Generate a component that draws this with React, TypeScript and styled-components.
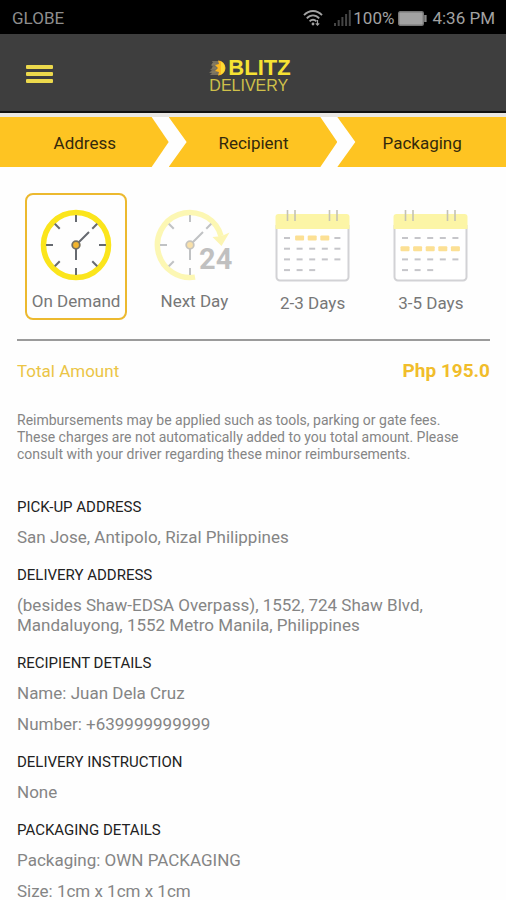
import React, { useState } from "react";
import styled, { createGlobalStyle } from "styled-components";

const GlobalStyle = createGlobalStyle`
  * { box-sizing: border-box; }
  html { scrollbar-width: none; }
  body {
    margin: 0;
    background: #fefefe;
    font-family: Roboto, "Liberation Sans", sans-serif;
  }
  button { font: inherit; border: 0; background: none; padding: 0; cursor: pointer; }
  h2, p, ol { margin: 0; padding: 0; }
`;

const Page = styled.div`
  display: flex;
  flex-direction: column;
  min-height: 100vh;
`;

const StatusBar = styled.div`
  display: flex;
  align-items: center;
  justify-content: space-between;
  height: 34px;
  padding: 2px 11px 0 12px;
  background: #000;
  color: #a2a2a2;
  font-size: 17px;
  line-height: 20px;
`;

const Carrier = styled.span`
  color: #8e8e8e;
`;

const StatusGroup = styled.div`
  display: flex;
  align-items: center;
`;

const WifiSvg = styled.svg`
  display: block;
  margin-right: 11px;
`;

const SignalSvg = styled.svg`
  display: block;
  margin-right: 2px;
`;

const BatterySvg = styled.svg`
  display: block;
  margin: 0 5px 0 4px;
`;

const AppBar = styled.header`
  display: grid;
  grid-template-columns: 1fr auto 1fr;
  align-items: center;
  height: 79px;
  padding: 0 26px;
  background: #3e3e3e;
  border-bottom: 2px solid #111;
`;

const MenuButton = styled.button`
  display: flex;
  flex-direction: column;
  gap: 3px;
  width: 28px;
  padding-top: 2px;
`;

const MenuBar = styled.span`
  width: 27px;
  height: 4px;
  border-radius: 1px;
  background: #ecd94c;
`;

const Logo = styled.div`
  display: flex;
  flex-direction: column;
  padding-top: 8px;
  margin-right: 6px;
  font-family: "Liberation Sans", Arial, sans-serif;
`;

const LogoTop = styled.div`
  display: flex;
  align-items: center;
  gap: 2px;
  color: #f6e233;
  font-size: 22px;
  line-height: 18px;
  font-weight: 700;
`;

const LogoBottom = styled.div`
  color: #cfc04a;
  font-size: 16px;
  line-height: 18px;
`;

const Steps = styled.ol`
  display: grid;
  grid-template-columns: repeat(3, 1fr);
  list-style: none;
  border-top: 4px solid #e9e7e3;
`;

const Step = styled.li<{ $first: boolean; $last: boolean }>`
  display: flex;
  align-items: center;
  justify-content: center;
  height: 50px;
  padding: 1px 0 0 1px;
  background: #fec422;
  clip-path: polygon(
    0 0,
    ${(p) => (p.$last ? "100%" : "calc(100% - 17px)")} 0,
    100% 50%,
    ${(p) => (p.$last ? "100%" : "calc(100% - 17px)")} 100%,
    0 100%,
    ${(p) => (p.$first ? "0" : "18px")} 50%
  );
`;

const StepButton = styled.button`
  color: #33290c;
  font-size: 17px;
  line-height: 20px;
`;

const Content = styled.main`
  padding: 26px 16px 0 17px;
`;

const SpeedRow = styled.div`
  display: grid;
  grid-template-columns: repeat(4, 1fr);
  padding-bottom: 19px;
  border-bottom: 2px solid #9b9b9b;
`;

const SpeedOption = styled.button<{ $selected: boolean }>`
  display: flex;
  flex-direction: column;
  align-items: center;
  gap: 6px;
  height: 127px;
  margin: 0 8px;
  padding-top: 10px;
  border: 2px solid ${(p) => (p.$selected ? "#ecb92f" : "transparent")};
  border-radius: 8px;
  color: #777;
  font-size: 17px;
  line-height: 20px;
  white-space: nowrap;
`;

const IconSvg = styled.svg`
  display: block;
  flex: none;
  overflow: visible;
`;

const TotalRow = styled.div`
  display: flex;
  align-items: center;
  justify-content: space-between;
  padding-top: 18px;
  line-height: 24px;
`;

const TotalLabel = styled.span`
  color: #ebc546;
  font-size: 17px;
`;

const TotalValue = styled.strong`
  color: #f1bd2b;
  font-size: 19px;
  font-weight: 700;
`;

const Note = styled.p`
  && { margin: 29px 0 35px; }
  max-width: 460px;
  color: #858585;
  font-size: 14px;
  line-height: 17px;
`;

const Section = styled.section`
  display: flex;
  flex-direction: column;
  margin-bottom: 19px;

  &:last-child { margin-bottom: 0; }
`;

const SectionTitle = styled.h2`
  color: #222;
  font-size: 15px;
  line-height: 18px;
  font-weight: 400;
`;

const SectionLine = styled.p`
  && { margin-top: 11px; }
  color: #858585;
  font-size: 17px;
  line-height: 20px;
`;

function WifiIcon() {
  return (
    <WifiSvg width="20" height="18" viewBox="0 0 20 18" fill="none" stroke="#a2a2a2" strokeWidth="1.8" aria-hidden="true">
      <path d="M1 6.2C6 .6 14 .6 19 6.2" />
      <path d="M3.8 9.4c3.6-4 8.8-4 12.4 0" />
      <path d="M6.6 12.4c2-2.2 4.8-2.2 6.8 0" />
      <circle cx="10" cy="15" r="1.4" fill="#a2a2a2" stroke="none" />
      <path d="M14.5 11v5M12.8 14.4l1.7 1.8 1.7-1.8" strokeWidth="1.2" />
    </WifiSvg>
  );
}

function SignalIcon() {
  return (
    <SignalSvg width="17" height="16" viewBox="0 0 17 16" fill="#454545" aria-hidden="true">
      <rect x="0" y="13" width="2" height="3" />
      <rect x="3.7" y="10" width="2" height="6" />
      <rect x="7.4" y="7" width="2" height="9" />
      <rect x="11.1" y="4" width="2" height="12" />
      <rect x="14.8" y="0" width="2" height="16" />
    </SignalSvg>
  );
}

function BatteryIcon() {
  return (
    <BatterySvg width="29" height="15" viewBox="0 0 29 15" aria-hidden="true">
      <rect x=".7" y=".7" width="24.6" height="13.6" rx="1.5" fill="#a2a2a2" stroke="#777" strokeWidth="1.4" />
      <rect x="26.2" y="4" width="2.4" height="7" fill="#8a8a8a" />
    </BatterySvg>
  );
}

function LogoMark() {
  return (
    <svg width="17" height="16" viewBox="0 0 17 16" aria-hidden="true">
      <path d="M3 1h7v14H1l2-2H0l3-3H1l3-3-2-2 2-2z" fill="#77705f" />
      <path d="M3 4h4M3 8h4M3 12h4" stroke="#8f8262" strokeWidth="1" />
      <path d="M9 .5a7.500 7.500 0 0 1 0 15L10 12l-4-1 3-3-3-3 4-1z" fill="#fcb820" />
      <path d="M12 1.500a7.500 7.500 0 0 1 0 13z" fill="#fbdc35" />
    </svg>
  );
}

const TICKS = [0, 45, 90, 135, 180, 225, 270, 315];

function ClockFace({ skip = [] }: { skip?: number[] }) {
  return (
    <>
      <g stroke="#666a70" strokeWidth="2">
        {TICKS.filter((a) => !skip.includes(a)).map((a) => (
          <path key={a} d="M40 10v7" transform={`rotate(${a} 40 40)`} />
        ))}
        <path d="M40 40v15M40 40l13-13" />
      </g>
      <circle cx="40" cy="40" r="3.800" fill="#f3b52c" stroke="#75705f" strokeWidth="1.800" />
    </>
  );
}

function ClockIcon() {
  return (
    <IconSvg width="80" height="80" viewBox="0 0 80 80" aria-hidden="true">
      <circle cx="40" cy="40" r="32.500" fill="none" stroke="#fbe51c" strokeWidth="5.500" />
      <ClockFace />
    </IconSvg>
  );
}

function NextDayIcon() {
  return (
    <IconSvg width="80" height="80" viewBox="0 0 80 80" aria-hidden="true">
      <g opacity=".4">
        <path d="M41 72.100A32.500 32.500 0 1 1 65 25.500L67 31" fill="none" stroke="#fbed46" strokeWidth="5.500" />
        <path d="M58.500 32 64 31.500 70 30 75.500 27.500 67.500 41z" fill="#fbe946" />
        <g transform="translate(-4 0)">
          <ClockFace skip={[90, 135]} />
        </g>
        <text x="45" y="64" fill="#666" fontFamily="Roboto, sans-serif" fontSize="29" fontWeight="700">24</text>
      </g>
    </IconSvg>
  );
}

function CalendarIcon({ marked }: { marked: string[] }) {
  const cells: React.ReactNode[] = [];
  [5, 5, 5, 3].forEach((count, row) => {
    for (let col = 0; col < count; col++) {
      const on = marked.includes(`${row}-${col}`);
      const cx = 15 + col * 12.6;
      const cy = 33 + row * 10.7;
      cells.push(
        <rect
          key={`${row}-${col}`}
          x={cx - (on ? 4.5 : 3)}
          y={cy - (on ? 2.5 : 1)}
          width={on ? 9 : 6}
          height={on ? 5 : 2}
          rx={on ? 1 : 0}
          fill={on ? "#fce094" : "#c6c6ca"}
        />
      );
    }
  });
  return (
    <IconSvg width="80" height="82" viewBox="1 0 80 82" aria-hidden="true">
      <path d="M4.500 20v52a3.500 3.500 0 0 0 3.500 3.500h65a3.500 3.500 0 0 0 3.500-3.500V20" fill="#fff" stroke="#d2d2d5" strokeWidth="2" />
      <path d="M3.500 24V12a3 3 0 0 1 3-3h68a3 3 0 0 1 3 3v12z" fill="#fcf5a6" />
      <path d="M15.500 5v11M23 5v11M57.500 5v11M65 5v11" stroke="#c4c2b4" strokeWidth="1.600" />
      {cells}
    </IconSvg>
  );
}

const STEPS = ["Address", "Recipient", "Packaging"];

const SPEEDS = [
  { label: "On Demand", icon: <ClockIcon /> },
  { label: "Next Day", icon: <NextDayIcon /> },
  { label: "2-3 Days", icon: <CalendarIcon marked={["0-1", "0-2", "0-3"]} /> },
  { label: "3-5 Days", icon: <CalendarIcon marked={["1-0", "1-1", "1-2", "1-3", "1-4"]} /> },
];

const SECTIONS = [
  { title: "PICK-UP ADDRESS", lines: ["San Jose, Antipolo, Rizal Philippines"] },
  {
    title: "DELIVERY ADDRESS",
    lines: ["(besides Shaw-EDSA Overpass), 1552, 724 Shaw Blvd, Mandaluyong, 1552 Metro Manila, Philippines"],
  },
  { title: "RECIPIENT DETAILS", lines: ["Name: Juan Dela Cruz", "Number: +639999999999"] },
  { title: "DELIVERY INSTRUCTION", lines: ["None"] },
  { title: "PACKAGING DETAILS", lines: ["Packaging: OWN PACKAGING", "Size: 1cm x 1cm x 1cm"] },
];

export default function App() {
  const [speed, setSpeed] = useState("On Demand");
  return (
    <Page>
      <GlobalStyle />
      <StatusBar>
        <Carrier>GLOBE</Carrier>
        <StatusGroup>
          <WifiIcon />
          <SignalIcon />
          <span>100%</span>
          <BatteryIcon />
          <span>4:36 PM</span>
        </StatusGroup>
      </StatusBar>
      <AppBar>
        <MenuButton type="button" aria-label="Menu">
          <MenuBar />
          <MenuBar />
          <MenuBar />
        </MenuButton>
        <Logo>
          <LogoTop>
            <LogoMark />
            <span>BLITZ</span>
          </LogoTop>
          <LogoBottom>DELIVERY</LogoBottom>
        </Logo>
      </AppBar>
      <Steps>
        {STEPS.map((s, i) => (
          <Step key={s} $first={i === 0} $last={i === STEPS.length - 1}>
            <StepButton type="button">{s}</StepButton>
          </Step>
        ))}
      </Steps>
      <Content>
        <SpeedRow>
          {SPEEDS.map((s) => (
            <SpeedOption
              key={s.label}
              type="button"
              aria-pressed={s.label === speed}
              $selected={s.label === speed}
              onClick={() => setSpeed(s.label)}
            >
              {s.icon}
              <span>{s.label}</span>
            </SpeedOption>
          ))}
        </SpeedRow>
        <TotalRow>
          <TotalLabel>Total Amount</TotalLabel>
          <TotalValue>Php 195.0</TotalValue>
        </TotalRow>
        <Note>
          Reimbursements may be applied such as tools, parking or gate fees. These charges are not automatically
          added to you total amount. Please consult with your driver regarding these minor reimbursements.
        </Note>
        {SECTIONS.map((s) => (
          <Section key={s.title}>
            <SectionTitle>{s.title}</SectionTitle>
            {s.lines.map((l) => (
              <SectionLine key={l}>{l}</SectionLine>
            ))}
          </Section>
        ))}
      </Content>
    </Page>
  );
}
